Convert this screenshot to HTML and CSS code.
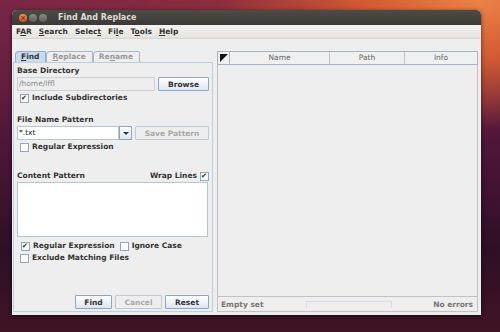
FILE: index.html
```html
<!DOCTYPE html>
<html lang="en">
<head>
    <meta charset="UTF-8">
    <title>Find And Replace</title>
    <link rel="stylesheet" href="styles.css">
</head>
<body>
    <div class="window">
        <div class="titlebar">
            <span class="wbtn close">&#215;</span>
            <span class="wbtn"></span>
            <span class="wbtn"></span>
            <span class="title">Find And Replace</span>
        </div>
        <div class="menubar">
            <span>F<u>A</u>R</span>
            <span><u>S</u>earch</span>
            <span>Selec<u>t</u></span>
            <span>Fi<u>l</u>e</span>
            <span>T<u>o</u>ols</span>
            <span><u>H</u>elp</span>
        </div>
        <div class="content">
            <div class="left">
                <div class="tabs">
                    <span class="tab active"><u>F</u>ind</span>
                    <span class="tab"><u>R</u>eplace</span>
                    <span class="tab">Re<u>n</u>ame</span>
                </div>
                <div class="panel">
                    <div class="label">Base Directory</div>
                    <div class="row">
                        <div class="field disabled">/home/lffl</div>
                        <button class="btn browse">Browse</button>
                    </div>
                    <label class="check"><span class="box on"></span>Include Subdirectories</label>

                    <div class="label gap">File Name Pattern</div>
                    <div class="row">
                        <div class="combo">
                            <div class="field">*.txt</div>
                            <span class="arrow"></span>
                        </div>
                        <button class="btn save" disabled>Save Pattern</button>
                    </div>
                    <label class="check"><span class="box"></span>Regular Expression</label>

                    <div class="label-row">
                        <span class="label">Content Pattern</span>
                        <label class="check wrap">Wrap Lines<span class="box on"></span></label>
                    </div>
                    <div class="textarea"></div>
                    <div class="opts">
                        <label class="check"><span class="box on"></span>Regular Expression</label>
                        <label class="check"><span class="box"></span>Ignore Case</label>
                    </div>
                    <label class="check"><span class="box"></span>Exclude Matching Files</label>

                    <div class="actions">
                        <button class="btn find">Find</button>
                        <button class="btn cancel" disabled>Cancel</button>
                        <button class="btn reset">Reset</button>
                    </div>
                </div>
            </div>
            <div class="right">
                <div class="table">
                    <div class="thead">
                        <span class="corner"><span class="tri"></span></span>
                        <span class="col name">Name</span>
                        <span class="col path">Path</span>
                        <span class="col info">Info</span>
                    </div>
                    <div class="tbody"></div>
                </div>
                <div class="status">
                    <span>Empty set</span>
                    <span class="progress"></span>
                    <span>No errors</span>
                </div>
            </div>
        </div>
    </div>
</body>
</html>
```
FILE: styles.css
```css
body {
    margin: 0;
    width: 500px;
    height: 332px;
    overflow: hidden;
    position: relative;
    font-family: "DejaVu Sans", sans-serif;
    font-size: 7.5px;
    color: #222;
    background:
        radial-gradient(ellipse 260px 130px at 480px 0px, #ec8248 0%, #d15a32 45%, rgba(160, 50, 50, 0) 100%),
        radial-gradient(ellipse 320px 200px at 250px 0px, #8e2e3c 0%, rgba(120, 30, 55, 0) 100%),
        linear-gradient(180deg, #72234a 0%, #4d1636 45%, #2e0f26 75%, #3f1424 100%);
}
.window {
    position: absolute;
    left: 12px;
    top: 10px;
    width: 469px;
    height: 305px;
    background: #eeeeee;
    border-radius: 5px 5px 0 0;
    box-shadow: 0 1px 4px rgba(0, 0, 0, 0.6);
    display: flex;
    flex-direction: column;
    overflow: hidden;
}
.titlebar {
    height: 15px;
    background: linear-gradient(#4c4b46, #3b3a36);
    display: flex;
    align-items: center;
    padding-left: 7px;
    gap: 2px;
    color: #dfdbd2;
}
.wbtn {
    width: 8px;
    height: 8px;
    border-radius: 50%;
    background: linear-gradient(#8d8b85, #5e5c57);
    font-size: 7px;
    line-height: 8px;
    text-align: center;
    color: #3a2a22;
}
.wbtn.close {
    background: linear-gradient(#f28a5c, #d94f1f);
}
.title {
    font-weight: bold;
    font-size: 8px;
    margin-left: 9px;
}
.menubar {
    height: 13px;
    background: linear-gradient(#f5f4f2, #e4e3e0);
    border-bottom: 1px solid #d6d5d2;
    display: flex;
    align-items: center;
    gap: 7px;
    padding-left: 4px;
    font-weight: bold;
    color: #333;
}
.content {
    flex: 1;
    display: flex;
    padding: 12px 3px 3px 1px;
    gap: 4px;
}
.left {
    width: 200px;
    display: flex;
    flex-direction: column;
}
.tabs {
    display: flex;
    height: 11px;
    padding-left: 2px;
}
.tab {
    border: 1px solid #a8b8c8;
    border-bottom: none;
    border-radius: 4px 2px 0 0;
    padding: 0 6px 0 5px;
    font-weight: bold;
    color: #9a9a9a;
    line-height: 10px;
    background: #eeeeee;
}
.tab.active {
    background: #c9dbee;
    color: #333;
    border-color: #8fb0d3;
}
.panel {
    flex: 1;
    border: 1px solid #b8cfe5;
    padding: 3px 3px 2px 3px;
    display: flex;
    flex-direction: column;
}
.label {
    font-weight: bold;
    color: #333;
    line-height: 10px;
}
.label.gap {
    margin-top: 12px;
}
.row {
    display: flex;
    gap: 3px;
    margin-top: 1px;
}
.field {
    flex: 1;
    height: 12px;
    border: 1px solid #b8c4cf;
    background: #fff;
    line-height: 12px;
    padding-left: 1px;
    color: #222;
}
.field.disabled {
    background: #eeeeee;
    color: #8a8a8a;
    border-color: #c8d0d8;
}
.btn {
    font-family: "DejaVu Sans", sans-serif;
    font-size: 7.5px;
    font-weight: bold;
    height: 14px;
    padding: 0;
    border: 1px solid #8ea7c4;
    border-radius: 1px;
    background: linear-gradient(#ffffff, #dce6f1);
    color: #333;
}
.btn:disabled {
    color: #a8a8a8;
    background: #eeeeee;
    border-color: #c0cad4;
}
.browse {
    width: 51px;
}
.combo {
    flex: 1;
    display: flex;
}
.arrow {
    width: 11px;
    height: 12px;
    border: 1px solid #8ea7c4;
    background: linear-gradient(#ffffff, #dce6f1);
    position: relative;
}
.arrow::after {
    content: "";
    position: absolute;
    left: 3px;
    top: 5px;
    border-left: 3px solid transparent;
    border-right: 3px solid transparent;
    border-top: 3px solid #333;
}
.save {
    width: 74px;
}
.check {
    display: flex;
    align-items: center;
    gap: 3px;
    font-weight: bold;
    color: #333;
    line-height: 10px;
    margin: 2px 0 0 3px;
}
.box {
    width: 7px;
    height: 7px;
    border: 1px solid #8ea7c4;
    background: #fff;
    position: relative;
}
.box.on::after {
    content: "\2714";
    position: absolute;
    left: 0;
    top: -2px;
    font-size: 7px;
    color: #222;
}
.label-row {
    display: flex;
    justify-content: space-between;
    align-items: center;
    margin-top: 19px;
}
.check.wrap {
    margin: 0;
}
.textarea {
    height: 53px;
    border: 1px solid #b8c4cf;
    background: #fff;
    margin-top: 1px;
    margin-right: 1px;
}
.opts {
    display: flex;
    gap: 5px;
    margin-top: 2px;
    padding-left: 4px;
}
.opts .check {
    margin-left: 0;
}
.actions {
    margin-top: auto;
    display: flex;
    justify-content: flex-end;
    gap: 3px;
}
.find {
    width: 37px;
}
.cancel {
    width: 47px;
}
.reset {
    width: 44px;
}
.right {
    flex: 1;
    display: flex;
    flex-direction: column;
    border: 1px solid #c2c2c2;
    border-top: none;
}
.table {
    flex: 1;
    display: flex;
    flex-direction: column;
    border-bottom: 1px solid #c2c2c2;
}
.thead {
    height: 12px;
    display: flex;
    border: 1px solid #a8b4c2;
    margin: 0 -1px;
    background: #f0f0f0;
    color: #666;
    line-height: 12px;
}
.corner {
    width: 11px;
    border-right: 1px solid #a8b4c2;
    position: relative;
}
.tri {
    position: absolute;
    left: 2px;
    top: 2px;
    border-left: 8px solid #111;
    border-bottom: 8px solid transparent;
}
.col {
    text-align: center;
    border-right: 1px solid #b8c4d0;
}
.col.name {
    width: 99px;
}
.col.path {
    width: 74px;
}
.col.info {
    flex: 1;
    border-right: none;
}
.tbody {
    flex: 1;
}
.status {
    height: 14px;
    display: flex;
    align-items: center;
    padding: 0 4px 0 3px;
    font-weight: bold;
    color: #777;
}
.progress {
    width: 84px;
    height: 6px;
    border: 1px solid #d4dde6;
    border-bottom: none;
    margin: 0 auto 0 42px;
}
```
